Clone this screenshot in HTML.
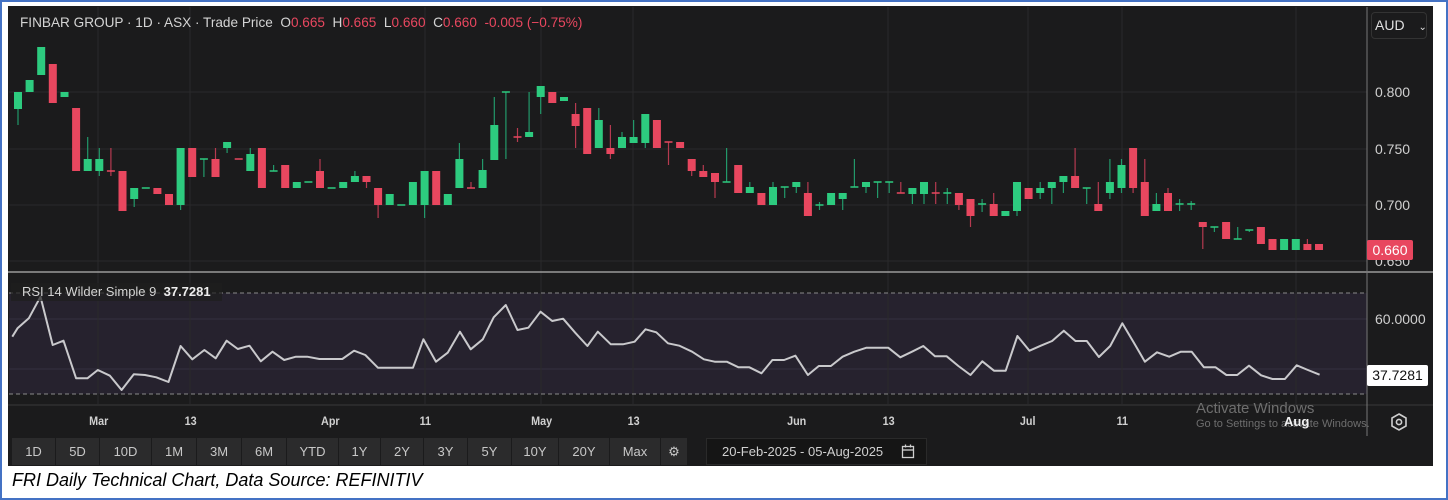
<!DOCTYPE html>
<html><head><meta charset="utf-8">
<style>
html,body{margin:0;padding:0;background:#fff;}
#wrap{position:relative;width:1448px;height:500px;overflow:hidden;background:#fff;font-family:"Liberation Sans",sans-serif;}
#border{position:absolute;left:0;top:0;width:1444px;height:496px;border:2px solid #4472c4;}
#chart{position:absolute;left:8px;top:6px;width:1425px;height:460px;background:#1b1b1c;}
.t{position:absolute;white-space:nowrap;}
.ax{position:absolute;top:414px;font-size:12px;color:#d0d0d0;font-weight:bold;transform:scaleX(0.9);}
.btn{position:absolute;top:438px;height:27px;background:#2b2b2c;color:#c8c8c8;font-size:13px;line-height:27px;text-align:center;border-right:1px solid #1b1b1c;box-sizing:border-box;}
</style></head><body>
<div id="wrap">
<div id="border"></div>
<div id="chart"></div>
<svg id="svg" width="1448" height="500" style="position:absolute;left:0;top:0"></svg>

<div class="t" style="left:20px;top:15px;font-size:13.6px;color:#d4d4d4;">FINBAR GROUP · 1D · ASX · Trade Price&nbsp; O<span style="color:#e8475f">0.665</span>&nbsp; H<span style="color:#e8475f">0.665</span>&nbsp; L<span style="color:#e8475f">0.660</span>&nbsp; C<span style="color:#e8475f">0.660</span>&nbsp; <span style="color:#e8475f">-0.005 (−0.75%)</span></div>

<div class="t" style="left:1371px;top:12px;width:56px;height:27px;border:1px solid #333;border-radius:4px;box-sizing:border-box;color:#e0e0e0;font-size:14px;line-height:25px;padding-left:3px;">AUD <span style="font-size:10px;margin-left:10px;">⌄</span></div>

<div class="t" style="left:1375px;top:84px;font-size:14px;color:#d0d0d0;">0.800</div>
<div class="t" style="left:1375px;top:141px;font-size:14px;color:#d0d0d0;">0.750</div>
<div class="t" style="left:1375px;top:197px;font-size:14px;color:#d0d0d0;">0.700</div>
<div class="t" style="left:1375px;top:253px;font-size:14px;color:#d0d0d0;">0.650</div>
<div class="t" style="left:1367px;top:240px;width:46px;height:20px;background:#e8475f;border-radius:2px;color:#fff;font-size:14px;line-height:20px;text-align:center;">0.660</div>

<div class="t" style="left:1375px;top:311px;font-size:14px;color:#d0d0d0;">60.0000</div>
<div class="t" style="left:1367px;top:365px;width:61px;height:21px;background:#fff;border-radius:2px;color:#111;font-size:14px;line-height:21px;text-align:center;">37.7281</div>

<div class="t" style="left:11px;top:283px;width:211px;height:18px;background:rgba(30,30,30,0.7);"></div>
<div class="t" style="left:22px;top:284px;font-size:13px;color:#d4d4d4;">RSI 14 Wilder Simple 9&nbsp; <b style="color:#eee;font-weight:bold">37.7281</b></div>

<div class="ax" style="left:88px;">Mar</div>
<div class="ax" style="left:184px;">13</div>
<div class="ax" style="left:320px;">Apr</div>
<div class="ax" style="left:419px;">11</div>
<div class="ax" style="left:530px;">May</div>
<div class="ax" style="left:627px;">13</div>
<div class="ax" style="left:786px;">Jun</div>
<div class="ax" style="left:882px;">13</div>
<div class="ax" style="left:1019px;">Jul</div>
<div class="ax" style="left:1116px;">11</div>
<div class="t" style="left:1196px;top:400px;font-size:15px;color:#6e6e6e;">Activate Windows</div>
<div class="t" style="left:1196px;top:418px;font-size:11px;color:#6e6e6e;">Go to Settings to activate Windows.</div>
<div class="t" style="left:1284px;top:414px;font-size:13px;color:#f2f2f2;font-weight:bold;">Aug</div>

<div class="btn" style="left:12px;width:44px;">1D</div>
<div class="btn" style="left:56px;width:44px;">5D</div>
<div class="btn" style="left:100px;width:52px;">10D</div>
<div class="btn" style="left:152px;width:45px;">1M</div>
<div class="btn" style="left:197px;width:45px;">3M</div>
<div class="btn" style="left:242px;width:45px;">6M</div>
<div class="btn" style="left:287px;width:52px;">YTD</div>
<div class="btn" style="left:339px;width:42px;">1Y</div>
<div class="btn" style="left:381px;width:43px;">2Y</div>
<div class="btn" style="left:424px;width:44px;">3Y</div>
<div class="btn" style="left:468px;width:44px;">5Y</div>
<div class="btn" style="left:512px;width:47px;">10Y</div>
<div class="btn" style="left:559px;width:51px;">20Y</div>
<div class="btn" style="left:610px;width:51px;">Max</div>
<div class="btn" style="left:661px;width:27px;">⚙</div>
<div class="t" style="left:706px;top:438px;width:221px;height:27px;background:#151515;border:1px solid #2a2a2a;box-sizing:border-box;color:#d0d0d0;font-size:13px;line-height:25px;padding-left:15px;">20-Feb-2025 - 05-Aug-2025</div>
<svg style="position:absolute;left:901px;top:444px" width="14" height="15"><rect x="1.5" y="2.5" width="11" height="11" fill="none" stroke="#cfcfcf" stroke-width="1.3"/><line x1="1.5" y1="6" x2="12.5" y2="6" stroke="#cfcfcf" stroke-width="1.3"/><line x1="4.5" y1="0.5" x2="4.5" y2="3.5" stroke="#cfcfcf" stroke-width="1.3"/><line x1="9.5" y1="0.5" x2="9.5" y2="3.5" stroke="#cfcfcf" stroke-width="1.3"/></svg>

<div class="t" style="left:12px;top:470px;font-size:18px;font-style:italic;color:#000;">FRI Daily Technical Chart, Data Source: REFINITIV</div>
</div>
<script>
var s=document.getElementById('svg'),h='';
function L(x1,y1,x2,y2,c,w,d){h+='<line x1="'+x1+'" y1="'+y1+'" x2="'+x2+'" y2="'+y2+'" stroke="'+c+'" stroke-width="'+(w||1)+'"'+(d?' stroke-dasharray="'+d+'"':'')+'/>';}
h+='<rect x="9" y="293" width="1358" height="101" fill="#26222e"/>';
[92,149,205,261].forEach(function(y){L(9,y,1367,y,'#2a2a2b');});
[319,369].forEach(function(y){L(9,y,1367,y,'#343040');});
[98,190,425,541,633,888,1028,1122,1296].forEach(function(x){L(x,7,x,404,'#2a2a2b');});
L(9,293,1367,293,'#8a8a8a',1,'4 3');L(9,394,1367,394,'#8a8a8a',1,'4 3');
L(8,272,1433,272,'#9a9a9a',1.5);L(8,405,1433,405,'#3a3a3a');
L(1367,7,1367,436,'#777');
var d=[['g',92,109,92,125],['g',80,92],['g',47,75],['r',64,103],['g',92,97],['r',108,171],['g',159,171,137,171],['g',159,171,148,176],['r',171,171,148,176],['r',171,211],['g',188,199,188,207],['g',188,188],['r',188,194],['r',194,205],['g',148,205,148,210],['r',148,177],['g',159,159,159,177],['r',159,177,148,177],['g',142,148,142,153],['r',159,159],['g',154,171,148,171],['r',148,188],['g',171,171,165,171],['r',165,188],['g',182,188],['g',182,182],['r',171,188,159,188],['g',188,188],['g',182,188],['g',176,182,171,182],['r',176,182,176,188],['r',188,205,188,218],['g',194,205],['g',205,205],['g',182,205],['g',171,205,171,218],['r',171,205],['g',194,205],['g',159,188,143,188],['r',188,188,182,188],['g',170,188,159,188],['g',125,160,97,160],['g',92,92,92,159],['r',137,137,128,142],['g',132,137,92,137],['g',86,97,86,114],['r',92,103],['g',97,101],['r',114,126,103,148],['r',108,154],['g',120,148,108,148],['r',148,154,125,159],['g',137,148,132,148],['g',137,143,120,143],['g',114,143,114,148],['r',120,148],['r',142,142,142,165],['r',142,148],['r',159,171,159,176],['r',171,177,165,177],['r',173,182,173,198],['g',182,182,148,182],['r',165,193],['g',187,193,182,193],['r',193,205],['g',187,205,182,205],['g',187,187,187,198],['g',182,187,182,193],['r',193,216,182,216],['g',205,205,202,210],['g',193,205],['g',193,199,193,210],['g',187,187,159,187],['g',182,187,182,193],['g',182,182,182,198],['g',182,182,182,193],['r',193,193,182,193],['g',188,194,188,204],['g',182,194,182,204],['r',193,193,182,204],['g',193,193,188,204],['r',193,205,193,210],['r',199,216,199,227],['g',204,204,199,212],['r',204,216,193,216],['g',211,216],['g',182,211,182,216],['r',188,199],['g',188,193,182,199],['g',182,188,182,204],['g',176,182,176,193],['r',176,188,148,188],['g',188,188,188,204],['r',204,211,182,211],['g',182,193,159,199],['g',165,188,159,193],['r',148,188,148,193],['r',182,216,159,216],['g',204,211,193,211],['r',193,211,188,211],['g',204,204,199,211],['g',204,204,201,210],['r',222,227,222,249],['g',227,227,227,232],['r',222,239],['g',239,239,227,239],['g',230,230,230,232],['r',227,244],['r',239,250],['g',239,250],['g',239,250],['r',244,250,239,250],['r',244,250]];
d.forEach(function(c,i){var x=18+i*11.616,col=c[0]=='g'?'#2dcb7f':'#e8475f',wc=c[0]=='g'?'#22996a':'#b63a50';
var hi=c.length>3?c[3]:c[1],lo=c.length>3?c[4]:c[2];
if(hi<c[1]||lo>c[2])L(x.toFixed(1),hi,x.toFixed(1),lo,wc,1.2);
var bh=Math.max(c[2]-c[1],1.5);
h+='<rect x="'+(x-4).toFixed(1)+'" y="'+(c[2]-c[1]<1.5?c[1]-0.75:c[1])+'" width="8" height="'+bh+'" fill="'+col+'"/>';});
var p1=[[10,170],[22,145],[48,115],[75,50],[103,195],[128,182],[157,295],[183,295],[207,270],[235,287],[262,330],[290,283],[316,285],[342,292],[370,306],[398,198],[425,238],[453,210],[479,235],[504,182],[530,207],[557,197],[583,244],[610,215],[637,240],[664,230],[690,230],[718,237],[745,237],[771,237],[798,212],[824,225],[853,263],[880,263],[906,263],[934,263],[958,178],[987,245],[1014,218],[1042,155],[1067,208],[1095,178],[1120,112],[1148,75],[1175,150],[1200,143],[1228,95],[1255,123],[1280,116],[1308,158],[1336,198],[1360,155],[1390,193],[1418,193],[1445,185],[1470,148],[1495,157],[1522,190],[1548,197]];
var p2=[[0,198],[28,215],[55,238],[80,245],[108,245],[135,262],[160,262],[188,280],[213,240],[240,240],[266,227],[295,285],[320,258],[348,258],[375,230],[402,215],[430,203],[480,203],[508,232],[535,215],[561,198],[588,229],[615,229],[642,258],[670,285],[697,244],[724,272],[751,272],[778,168],[806,212],[832,197],[858,183],[885,152],[912,183],[938,183],[966,231],[992,198],[1020,130],[1046,187],[1072,245],[1100,217],[1128,230],[1155,215],[1180,215],[1208,262],[1235,262],[1260,285],[1285,285],[1312,257],[1340,286],[1366,297],[1395,297],[1422,256],[1448,270],[1475,284]];
var pts=p1.map(function(p){return (8+p[0]/2.306).toFixed(1)+','+(280+p[1]/3).toFixed(1);}).concat(p2.map(function(p){return (680+p[0]/2.306).toFixed(1)+','+(280+p[1]/3).toFixed(1);}));
h+='<polyline points="'+pts.join(' ')+'" fill="none" stroke="#c9c9cc" stroke-width="2" stroke-linejoin="round"/>';
h+='<polygon points="1399,414 1406,418 1406,426 1399,430 1392,426 1392,418" fill="none" stroke="#cfcfcf" stroke-width="1.6"/><circle cx="1399" cy="422" r="2.6" fill="none" stroke="#cfcfcf" stroke-width="1.6"/>';
s.innerHTML=h;
</script>
</body></html>
